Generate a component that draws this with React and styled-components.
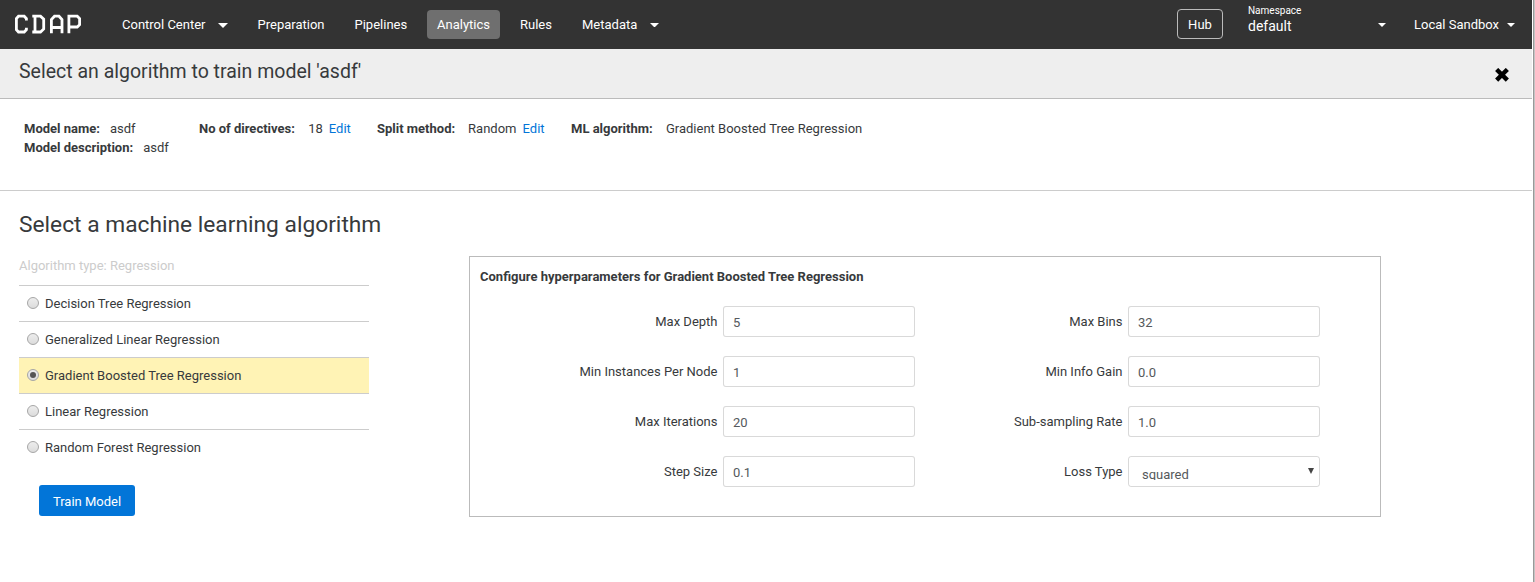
import React from "react";
import styled, { createGlobalStyle } from "styled-components";

const GlobalStyle = createGlobalStyle`
  * { box-sizing: border-box; }
  body {
    margin: 0;
    background: #fff;
    color: #373a3c;
    font-family: Roboto, "Liberation Sans", sans-serif;
    font-size: 13px;
    line-height: 19.5px;
    overflow: hidden;
  }
`;

const Page = styled.div`
  width: 1535px;
  height: 582px;
  padding-right: 1px;
  background: #c4c4c4;
`;

const Content = styled.div`
  height: 582px;
  background: #fff;
  padding-right: 1px;
  border-right: 1px solid #999;
`;

const Navbar = styled.nav`
  display: flex;
  align-items: center;
  height: 49px;
  background: #333;
  color: #fff;
`;

const Logo = styled.svg`
  display: block;
  margin-left: 14px;
  width: 68px;
  height: 20px;
  margin-top: -1px;
`;

const NavLinks = styled.div`
  display: flex;
  align-items: center;
  margin-left: 30px;
`;

const NavItem = styled.a`
  display: flex;
  align-items: center;
  height: 29px;
  width: ${(p) => p.$width}px;
  padding-left: 10px;
  margin-right: ${(p) => p.$gap || 10}px;
  border-radius: 4px;
  white-space: nowrap;
  background: ${(p) => (p.$active ? "#6f6f6f" : "transparent")};
`;

const CaretIcon = styled.svg`
  display: block;
  flex: none;
  width: ${(p) => p.$size}px;
  height: ${(p) => p.$size / 2}px;
  margin: 1px 0 0 ${(p) => p.$gap}px;
  fill: #fff;
`;

const NavRight = styled.div`
  display: flex;
  align-items: center;
  margin-left: auto;
  padding-right: 17px;
`;

const HubButton = styled.button`
  width: 46px;
  height: 30px;
  padding: 2px 0 0;
  margin-bottom: 2px;
  border: 1px solid #bbb;
  border-radius: 4px;
  background: transparent;
  color: #fff;
  font: inherit;
`;

const Namespace = styled.div`
  display: flex;
  align-items: center;
  width: 138px;
  margin-left: 25px;
`;

const NamespaceText = styled.div`
  display: flex;
  flex-direction: column;
  width: 130px;
  height: 42px;
`;

const NamespaceLabel = styled.span`
  font-size: 10px;
  line-height: 14px;
  height: 13px;
`;

const NamespaceValue = styled.span`
  font-size: 14px;
  line-height: 18px;
`;

const Account = styled.div`
  display: flex;
  align-items: center;
  margin-left: 28px;
  white-space: nowrap;
`;

const TitleBar = styled.header`
  display: flex;
  justify-content: space-between;
  height: 50px;
  padding: 12px 23px 0 19px;
  background: #eee;
  border-bottom: 1px solid #bbb;
`;

const Title = styled.h1`
  margin: 0;
  font-size: 19.5px;
  font-weight: 400;
  line-height: 22px;
`;

const CloseIcon = styled.svg`
  display: block;
  width: 14px;
  height: 14px;
  margin-top: 7px;
`;

const Summary = styled.section`
  display: flex;
  height: 92px;
  padding: 20px 24px 0;
  border-bottom: 1px solid #ccc;
  line-height: 19px;
`;

const SummaryColumn = styled.div`
  width: ${(p) => p.$width}px;
  white-space: nowrap;
`;

const SummaryLine = styled.div`
  display: flex;
  height: 19px;
`;

const SummaryValue = styled.span`
  margin-left: ${(p) => p.$gap}px;
`;

const EditLink = styled.a`
  margin-left: 6px;
  color: #0275d8;
`;

const Main = styled.main`
  padding: 20px 0 0 19px;
`;

const SectionTitle = styled.h2`
  margin: 0;
  font-size: 22.75px;
  font-weight: 400;
  line-height: 28px;
`;

const Columns = styled.div`
  display: flex;
  align-items: flex-start;
  margin-top: 17px;
`;

const AlgorithmColumn = styled.div`
  width: 350px;
`;

const AlgorithmType = styled.div`
  height: 29px;
  color: #ccc;
`;

const AlgorithmRow = styled.label`
  display: flex;
  align-items: center;
  height: 36px;
  padding-left: 8px;
  border-top: 1px solid #ccc;
  background: ${(p) => (p.$selected ? "#fff3b5" : "#fff")};
`;

const Radio = styled.span`
  display: flex;
  align-items: center;
  justify-content: center;
  width: 12px;
  height: 12px;
  margin: 0 6px 1px 0;
  border: 1px solid #a6a6a6;
  border-radius: 50%;
  background: linear-gradient(#ededed, #dcdcdc);
`;

const RadioDot = styled.span`
  width: 6px;
  height: 6px;
  border-radius: 50%;
  background: #555;
`;

const TrainButton = styled.button`
  display: block;
  width: 96px;
  height: 31px;
  margin: 20px 0 0 20px;
  padding: 2px 0 0;
  border: 0;
  border-radius: 3px;
  background: #0275d8;
  color: #fff;
  font: inherit;
`;

const ConfigPanel = styled.section`
  width: 912px;
  height: 261px;
  margin-left: 100px;
  padding: 10px;
  border: 1px solid #bbb;
`;

const ConfigTitle = styled.div`
  height: 20px;
  font-weight: 700;
`;

const Fields = styled.div`
  display: grid;
  grid-template-columns: 435px 405px;
  row-gap: 19px;
  margin-top: 19px;
`;

const Field = styled.div`
  display: flex;
  align-items: center;
  justify-content: flex-end;
  height: 31px;
`;

const FieldLabel = styled.label`
  margin-right: 5.5px;
`;

const Input = styled.input`
  width: 192px;
  height: 31px;
  padding: 2px 9px 0;
  border: 1px solid rgba(0, 0, 0, 0.15);
  border-radius: 3px;
  outline: 0;
  background: #fff;
  color: #55595c;
  font: inherit;
`;

const SelectBox = styled.div`
  display: flex;
  justify-content: space-between;
  width: 192px;
  height: 31px;
  padding: 7px 5px 0 13px;
  border: 1px solid rgba(0, 0, 0, 0.15);
  border-radius: 3px;
  color: #55595c;
`;

/* The select's text area is shorter than its line, so descenders are clipped. */
const SelectValue = styled.span`
  height: 16px;
  overflow: hidden;
  line-height: 21px;
`;

const SelectArrow = styled.svg`
  width: 6px;
  height: 6px;
  margin-top: 4px;
  fill: #444;
`;

const Caret = ({ size = 8, gap = 0 }) => (
  <CaretIcon $size={size} $gap={gap} viewBox="0 0 10 5" preserveAspectRatio="none">
    <path d="M0 0h10L5 5z" />
  </CaretIcon>
);

const algorithms = [
  "Decision Tree Regression",
  "Generalized Linear Regression",
  "Gradient Boosted Tree Regression",
  "Linear Regression",
  "Random Forest Regression",
];

const fields = [
  ["Max Depth", "5"],
  ["Max Bins", "32"],
  ["Min Instances Per Node", "1"],
  ["Min Info Gain", "0.0"],
  ["Max Iterations", "20"],
  ["Sub-sampling Rate", "1.0"],
  ["Step Size", "0.1"],
];

export default function App() {
  const selected = "Gradient Boosted Tree Regression";
  return (
    <Page>
      <GlobalStyle />
      <Content>
        <Navbar>
          <Logo viewBox="0 0 68 20" fill="none" stroke="#fff" strokeWidth="2.8" aria-label="CDAP">
            <path d="M12.400 6.500V4.500L10.200 2.200H4.500L2.400 4.500V15.700L4.500 18H10.200L12.400 15.700V13.700" />
            <path d="M18.300 2.200H26.500L29.700 5.200V15L26.500 18H18.300M21 2.200V18" />
            <path d="M37.400 19.300V5.500L40.500 2.200H45L48 5.500V19.300M37.400 13.500H48" />
            <path d="M54.900 19.300V2.200H63.200L65.600 4.500V10.700L63.200 13H54.900" />
          </Logo>
          <NavLinks>
            <NavItem $width={126} $gap={9.5}>Control Center<Caret size={10} gap={12.5} /></NavItem>
            <NavItem $width={87}>Preparation</NavItem>
            <NavItem $width={72} $gap={10.5}>Pipelines</NavItem>
            <NavItem $width={73} $active>Analytics</NavItem>
            <NavItem $width={52}>Rules</NavItem>
            <NavItem $width={90}>Metadata<Caret size={9} gap={13} /></NavItem>
          </NavLinks>
          <NavRight>
            <HubButton>Hub</HubButton>
            <Namespace>
              <NamespaceText>
                <NamespaceLabel>Namespace</NamespaceLabel>
                <NamespaceValue>default</NamespaceValue>
              </NamespaceText>
              <Caret />
            </Namespace>
            <Account>Local Sandbox<Caret gap={8} /></Account>
          </NavRight>
        </Navbar>
        <TitleBar>
          <Title>Select an algorithm to train model 'asdf'</Title>
          <CloseIcon viewBox="0 0 14 14" stroke="#000" strokeWidth="4.4" strokeLinecap="square" strokeLinejoin="round">
            <path d="M3.200 3L10.800 10.600M10.800 3L3.200 10.600" />
          </CloseIcon>
        </TitleBar>
        <Summary>
          <SummaryColumn $width={175}>
            <SummaryLine><strong>Model name:</strong><SummaryValue $gap={10}>asdf</SummaryValue></SummaryLine>
            <SummaryLine><strong>Model description:</strong><SummaryValue $gap={10}>asdf</SummaryValue></SummaryLine>
          </SummaryColumn>
          <SummaryColumn $width={178}>
            <SummaryLine><strong>No of directives:</strong><SummaryValue $gap={13.3}>18</SummaryValue><EditLink>Edit</EditLink></SummaryLine>
          </SummaryColumn>
          <SummaryColumn $width={194}>
            <SummaryLine><strong>Split method:</strong><SummaryValue $gap={13}>Random</SummaryValue><EditLink>Edit</EditLink></SummaryLine>
          </SummaryColumn>
          <SummaryColumn $width={300}>
            <SummaryLine><strong>ML algorithm:</strong><SummaryValue $gap={13.3}>Gradient Boosted Tree Regression</SummaryValue></SummaryLine>
          </SummaryColumn>
        </Summary>
        <Main>
          <SectionTitle>Select a machine learning algorithm</SectionTitle>
          <Columns>
            <AlgorithmColumn>
              <AlgorithmType>Algorithm type: Regression</AlgorithmType>
              {algorithms.map((name) => (
                <AlgorithmRow key={name} $selected={name === selected}>
                  <Radio>{name === selected && <RadioDot />}</Radio>
                  {name}
                </AlgorithmRow>
              ))}
              <TrainButton>Train Model</TrainButton>
            </AlgorithmColumn>
            <ConfigPanel>
              <ConfigTitle>Configure hyperparameters for {selected}</ConfigTitle>
              <Fields>
                {fields.map(([label, value]) => (
                  <Field key={label}>
                    <FieldLabel>{label}</FieldLabel>
                    <Input defaultValue={value} />
                  </Field>
                ))}
                <Field>
                  <FieldLabel>Loss Type</FieldLabel>
                  <SelectBox>
                    <SelectValue>squared</SelectValue>
                    <SelectArrow viewBox="0 0 6 6"><path d="M0 0h6L3 6z" /></SelectArrow>
                  </SelectBox>
                </Field>
              </Fields>
            </ConfigPanel>
          </Columns>
        </Main>
      </Content>
    </Page>
  );
}
